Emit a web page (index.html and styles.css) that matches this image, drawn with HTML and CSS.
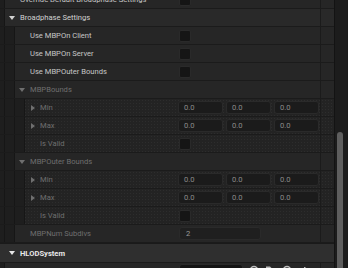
FILE: index.html
```html
<!DOCTYPE html>
<html lang="en">
  <head>
    <meta charset="UTF-8" />
    <title>Details</title>
    <link rel="stylesheet" href="styles.css">
  </head>
  <body>
    <div class="panel">
      <div class="details">
        <div class="row">
          <div class="label"><div class="ind first"></div><div class="tog"></div>Override Default Broadphase Settings</div>
          <div class="value"><span class="check"></span></div>
          <div class="reset"></div>
        </div>
        <div class="row cat">
          <div class="label"><div class="ind first"></div><div class="tog"><span class="down"></span></div>Broadphase Settings</div>
          <div class="value"></div>
          <div class="reset"></div>
        </div>
        <div class="row">
          <div class="label"><div class="ind first"></div><div class="ind"></div><div class="tog"></div>Use MBPOn Client</div>
          <div class="value"><span class="check"></span></div>
          <div class="reset"></div>
        </div>
        <div class="row">
          <div class="label"><div class="ind first"></div><div class="ind"></div><div class="tog"></div>Use MBPOn Server</div>
          <div class="value"><span class="check"></span></div>
          <div class="reset"></div>
        </div>
        <div class="row">
          <div class="label"><div class="ind first"></div><div class="ind"></div><div class="tog"></div>Use MBPOuter Bounds</div>
          <div class="value"><span class="check"></span></div>
          <div class="reset"></div>
        </div>

        <div class="row off">
          <div class="label"><div class="ind first"></div><div class="ind"></div><div class="tog"><span class="down"></span></div>MBPBounds</div>
          <div class="value"></div>
          <div class="reset"></div>
        </div>
        <div class="row off pat">
          <div class="label"><div class="ind first"></div><div class="ind"></div><div class="ind"></div><div class="tog"><span class="right"></span></div>Min</div>
          <div class="value"><span class="num">0.0</span><span class="num">0.0</span><span class="num">0.0</span></div>
          <div class="reset"></div>
        </div>
        <div class="row off pat">
          <div class="label"><div class="ind first"></div><div class="ind"></div><div class="ind"></div><div class="tog"><span class="right"></span></div>Max</div>
          <div class="value"><span class="num">0.0</span><span class="num">0.0</span><span class="num">0.0</span></div>
          <div class="reset"></div>
        </div>
        <div class="row off pat">
          <div class="label"><div class="ind first"></div><div class="ind"></div><div class="ind"></div><div class="tog"></div>Is Valid</div>
          <div class="value"><span class="check"></span></div>
          <div class="reset"></div>
        </div>

        <div class="row off">
          <div class="label"><div class="ind first"></div><div class="ind"></div><div class="tog"><span class="down"></span></div>MBPOuter Bounds</div>
          <div class="value"></div>
          <div class="reset"></div>
        </div>
        <div class="row off pat">
          <div class="label"><div class="ind first"></div><div class="ind"></div><div class="ind"></div><div class="tog"><span class="right"></span></div>Min</div>
          <div class="value"><span class="num">0.0</span><span class="num">0.0</span><span class="num">0.0</span></div>
          <div class="reset"></div>
        </div>
        <div class="row off pat">
          <div class="label"><div class="ind first"></div><div class="ind"></div><div class="ind"></div><div class="tog"><span class="right"></span></div>Max</div>
          <div class="value"><span class="num">0.0</span><span class="num">0.0</span><span class="num">0.0</span></div>
          <div class="reset"></div>
        </div>
        <div class="row off pat">
          <div class="label"><div class="ind first"></div><div class="ind"></div><div class="ind"></div><div class="tog"></div>Is Valid</div>
          <div class="value"><span class="check"></span></div>
          <div class="reset"></div>
        </div>
        <div class="row off">
          <div class="label"><div class="ind first"></div><div class="ind"></div><div class="tog"></div>MBPNum Subdivs</div>
          <div class="value"><span class="num wide">2</span></div>
          <div class="reset"></div>
        </div>

        <div class="row top">
          <div class="label"><div class="tog wide"><span class="down"></span></div>HLODSystem</div>
          <div class="value"></div>
          <div class="reset"></div>
        </div>
        <div class="row last">
          <div class="label"><div class="ind first"></div><div class="tog"></div></div>
          <div class="value">
            <span class="num combo"></span>
            <svg class="icon" width="60" height="10" viewBox="0 0 60 10">
              <circle cx="5" cy="5" r="3.5" fill="none" stroke="#bdbdbd" stroke-width="1.5"/>
              <path d="M17 1.5 h4 l3 3 v5 h-7 z" fill="#bdbdbd"/>
              <circle cx="38" cy="5" r="3.5" fill="none" stroke="#bdbdbd" stroke-width="1.5"/>
              <rect x="55" y="2" width="1.5" height="6" fill="#bdbdbd"/>
            </svg>
          </div>
          <div class="reset"></div>
        </div>
      </div>
      <div class="scrollbar">
        <div class="thumb"></div>
      </div>
    </div>
  </body>
</html>
```

FILE: styles.css
```css
body {
  margin: 0;
  background: #1a1a1a;
  font-family: Roboto, "Liberation Sans", sans-serif;
  font-size: 7.6px;
  color: #c6c6c6;
  overflow: hidden;
}
.panel {
  display: flex;
  height: 268px;
  overflow: hidden;
}
.details {
  width: 334px;
  margin-top: -9px;
}
.row {
  display: grid;
  grid-template-columns: 174px 146px 14px;
  height: 17px;
  border-bottom: 1px solid #1b1b1b;
  background: #262626;
}
.row.cat {
  background: #292929;
  color: #d2d2d2;
}
.row.top {
  height: 18px;
  margin-top: 1px;
  background: #2f2f2f;
  color: #e8e8e8;
  font-weight: bold;
}
.row.top .reset {
  border-left: none;
}
.row.off {
  color: #6f6f6f;
}
.row.pat {
  background-color: #232323;
  background-image: radial-gradient(circle, #2d2d2d 0.7px, transparent 0.9px);
  background-size: 3px 3px;
}
.label {
  display: flex;
  align-items: center;
  white-space: nowrap;
  overflow: hidden;
}
.ind {
  align-self: stretch;
  width: 9px;
  background: #1e1e1e;
  border-right: 1px solid #161616;
}
.ind.first {
  width: 4px;
}
.tog {
  width: 15px;
  flex: none;
  display: flex;
  align-items: center;
}
.tog.wide {
  width: 20px;
}
.tog.wide .down {
  margin-left: 9px;
}
.down {
  margin-left: 4px;
  border-left: 3px solid transparent;
  border-right: 3px solid transparent;
  border-top: 4px solid currentColor;
}
.right {
  margin-left: 6px;
  border-top: 3px solid transparent;
  border-bottom: 3px solid transparent;
  border-left: 4px solid currentColor;
}
.value {
  display: flex;
  align-items: center;
  gap: 3px;
  padding-left: 4px;
}
.check {
  width: 10px;
  height: 10px;
  margin-left: 1px;
  background: #151515;
  border: 1px solid #2a2a2a;
  border-radius: 2px;
}
.num {
  box-sizing: border-box;
  width: 45px;
  height: 13px;
  padding-left: 5px;
  line-height: 11px;
  background: #1b1b1b;
  border: 1px solid #2a2a2a;
  border-radius: 3px;
  color: #8a8a8a;
}
.num.wide {
  width: 82px;
  margin-left: 1px;
  padding-left: 6px;
  background: #1f1f1f;
  color: #9a9a9a;
}
.last .value {
  align-items: flex-start;
  padding-top: 1px;
}
.num.combo {
  width: 64px;
  height: 14px;
  margin-left: 1px;
  background: #141414;
}
.icon {
  margin-top: 1px;
  margin-left: 3px;
}
.reset {
  border-left: 1px solid #1b1b1b;
}
.scrollbar {
  width: 13px;
  background: #1c1c1c;
  border-left: 1px solid #131313;
  padding-top: 132px;
  padding-left: 2px;
  box-sizing: border-box;
}
.thumb {
  width: 6px;
  height: 150px;
  background: #5e5e5e;
  border-radius: 3px;
}
```
